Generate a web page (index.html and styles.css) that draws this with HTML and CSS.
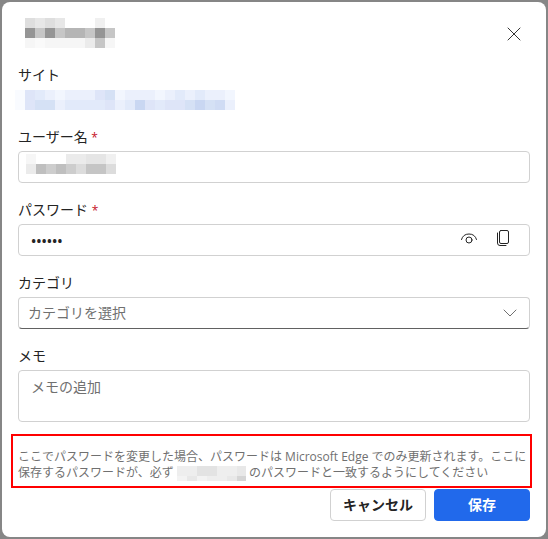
FILE: index.html
```html
<!DOCTYPE html>
<html lang="ja">

<head>
  <meta charset="UTF-8">
  <meta name="viewport" content="width=device-width, initial-scale=1.0">
  <title>パスワードの編集</title>
  <link rel="stylesheet" href="styles.css">
</head>

<body>
  <form class="dialog">
    <div class="dialog-header">
      <svg class="masked-title" width="90" height="30" shape-rendering="crispEdges" aria-hidden="true">
        <path fill="#dedede" d="M0 0h10v10H0zM20 0h10v10H20z" />
        <path fill="#e7e7e7" d="M10 0h10v10H10zM30 0h10v10H30z" />
        <path fill="#f0f0f0" d="M70 0h10v10H70z" />
        <path fill="#959595" d="M0 10h10v10H0zM20 10h10v10H20zM70 10h10v10H70z" />
        <path fill="#c6c6c6" d="M10 10h10v10H10zM30 10h10v10H30zM60 10h10v10H60zM80 10h10v10H80zM70 20h10v10H70z" />
        <path fill="#b5b5b5" d="M40 10h20v10H40z" />
        <path fill="#f6f6f6" d="M0 20h10v10H0zM20 20h40v10H20zM80 20h10v10H80z" />
        <path fill="#fafafa" d="M10 20h10v10H10z" />
        <path fill="#ebebeb" d="M60 20h10v10H60z" />
      </svg>
      <button type="button" class="close" aria-label="閉じる">
        <svg width="14" height="14" viewBox="0 0 14 14">
          <path d="M1 1l12 12M13 1L1 13" />
        </svg>
      </button>
    </div>

    <div class="field">
      <span class="label">サイト</span>
      <a href="#" class="site-link" aria-label="サイト">
        <svg width="220" height="20" shape-rendering="crispEdges" aria-hidden="true">
          <path fill="#f9fbff" d="M0 0h10v20H0z" />
          <path fill="#ebf0fc" d="M10 0h210v20H10z" />
          <path fill="#dee5f8" d="M10 0h10v20H10zM80 0h10v10H80zM90 10h10v10H90zM130 10h10v10H130zM150 10h20v10H150z" />
          <path fill="#e2eafa" d="M20 0h10v10H20zM50 10h30v10H50zM80 10h10v10H80zM110 10h10v10H110zM140 10h10v10H140zM160 0h10v10H160zM180 0h10v10H180z" />
          <path fill="#f2f6fe" d="M40 0h10v10H40zM100 0h10v10H100zM140 0h10v10H140zM210 0h10v10H210z" />
          <path fill="#d5e1f5" d="M20 10h20v10H20zM90 0h10v10H90zM170 10h10v10H170zM190 10h10v10H190z" />
          <path fill="#c9d7f2" d="M120 10h10v10H120zM180 10h10v10H180z" />
          <path fill="#d0dcf4" d="M200 10h10v10H200z" />
        </svg>
      </a>
    </div>

    <div class="field">
      <label class="label" for="username">ユーザー名 <span class="required">*</span></label>
      <div class="control">
        <input type="text" id="username" required>
        <svg class="masked-name" width="90" height="20" shape-rendering="crispEdges" aria-hidden="true">
          <path fill="#f6f6f6" d="M0 0h10v10H0z" />
          <path fill="#ebebeb" d="M0 10h10v10H0zM40 0h20v10H40z" />
          <path fill="#e5e5e5" d="M60 0h20v10H60z" />
          <path fill="#f0f0f0" d="M80 0h10v10H80z" />
          <path fill="#bfbfbf" d="M10 10h10v10H10zM30 10h10v10H30z" />
          <path fill="#cdcdcd" d="M20 10h10v10H20zM40 10h10v10H40z" />
          <path fill="#dcdcdc" d="M50 10h10v10H50zM80 10h10v10H80z" />
          <path fill="#c5c5c5" d="M60 10h20v10H60z" />
        </svg>
      </div>
    </div>

    <div class="field">
      <label class="label" for="password">パスワード <span class="required">*</span></label>
      <div class="control">
        <input type="password" id="password" class="password" value="secret" required>
        <button type="button" class="icon-button" aria-label="パスワードを表示">
          <svg width="18" height="18" viewBox="0 0 18 18">
            <path d="M1.500 10.500C2.500 7 5 5 9 5s6.500 2 7.500 5.500" />
            <circle cx="9" cy="11" r="3" />
          </svg>
        </button>
        <button type="button" class="icon-button" aria-label="パスワードをコピー">
          <svg width="18" height="18" viewBox="0 0 18 18">
            <rect x="5.500" y="1.500" width="9" height="13" rx="1.500" />
            <path d="M3.500 4v10q0 2.500 2.500 2.500h6" />
          </svg>
        </button>
      </div>
    </div>

    <div class="field">
      <label class="label" for="category">カテゴリ</label>
      <div class="control category">
        <select id="category">
          <option>カテゴリを選択</option>
        </select>
        <svg class="chevron" width="14" height="8" viewBox="0 0 14 8" aria-hidden="true">
          <path d="M1 1l6 6 6-6" />
        </svg>
      </div>
    </div>

    <div class="field">
      <label class="label" for="memo">メモ</label>
      <textarea id="memo" placeholder="メモの追加"></textarea>
    </div>

    <p class="notice">ここでパスワードを変更した場合、パスワードは Microsoft Edge でのみ更新されます。ここに保存するパスワードが、必ず
      <svg class="masked-site" width="69" height="15" shape-rendering="crispEdges" aria-hidden="true">
        <path fill="#eeeeee" d="M0 0h69v15H0z" />
        <path fill="#e3e3e3" d="M20 0h20v10H20z" />
        <path fill="#f3f3f3" d="M0 10h10v5H0zM20 10h10v5H20z" />
        <path fill="#e8e8e8" d="M10 10h10v5H10zM50 10h10v5H50zM60 0h9v10H60z" />
        <path fill="#d5d5d5" d="M60 10h9v5H60z" />
      </svg>
      のパスワードと一致するようにしてください</p>

    <div class="actions">
      <button type="button" class="button">キャンセル</button>
      <button type="submit" class="button primary">保存</button>
    </div>
  </form>
</body>

</html>
```
FILE: styles.css
```css
* {
  box-sizing: border-box;
}

body {
  margin: 0;
  padding: 2px;
  background-color: #868686;
  color: #242424;
  font-family: "Open Sans", "Noto Sans CJK JP", sans-serif;
  font-size: 14px;
  line-height: 20px;
}

button,
input,
select,
textarea {
  font: inherit;
  color: inherit;
}

svg {
  display: block;
  fill: none;
  stroke-linecap: round;
}

.dialog {
  padding: 16px;
  background-color: white;
  border-radius: 8px;
}

.dialog-header {
  display: flex;
  justify-content: space-between;
  align-items: center;
  height: 30px;
  margin-bottom: 17px;
  padding-left: 7px;
}

.close {
  display: flex;
  justify-content: center;
  align-items: center;
  width: 32px;
  height: 32px;
  padding: 2px 0 0;
  border: none;
  background: none;
  stroke: #333;
  cursor: pointer;
}

.field {
  display: flex;
  flex-direction: column;
  gap: 4px;
  margin-bottom: 17px;
}

.label {
  height: 20px;
}

.required {
  color: #c50f1f;
  font-size: 12px;
}

.site-link {
  display: block;
  height: 21px;
  padding-top: 1px;
  margin-left: -3px;
}

.control {
  position: relative;
  display: flex;
  align-items: center;
  height: 32px;
  border: 1px solid #d1d1d1;
  border-radius: 4px;
}

.control input {
  flex: 1;
  min-width: 0;
  height: 30px;
  padding: 0 12px;
  border: none;
  background: none;
  outline: none;
}

.control .password {
  font-weight: 600;
}

.masked-name {
  position: absolute;
  top: 2px;
  left: 7px;
}

.icon-button {
  display: flex;
  justify-content: center;
  align-items: center;
  width: 34px;
  height: 30px;
  padding: 0 0 4px;
  border: none;
  background: none;
  stroke: #242424;
  cursor: pointer;
}

.icon-button:last-child {
  margin-right: 9px;
}

.category {
  border-bottom-color: #616161;
}

.category select {
  appearance: none;
  width: 100%;
  height: 30px;
  padding: 0 36px 0 9px;
  border: none;
  background: none;
  color: #707070;
}

.chevron {
  position: absolute;
  right: 12px;
  stroke: #707070;
  pointer-events: none;
}

textarea {
  display: block;
  width: 100%;
  height: 52px;
  padding: 6px 12px;
  border: 1px solid #d1d1d1;
  border-radius: 4px;
  resize: none;
}

textarea::placeholder {
  color: #707070;
}

.notice {
  margin: -5px -2px 1px -7px;
  padding: 13px 0 5px 5px;
  border: 2px solid #f00;
  color: #707070;
  font-size: 12px;
  line-height: 16px;
}

.masked-site {
  display: inline-block;
  vertical-align: -4px;
}

.actions {
  display: flex;
  justify-content: flex-end;
  gap: 8px;
}

.button {
  width: 96px;
  height: 32px;
  padding: 0;
  border: 1px solid #d1d1d1;
  border-radius: 4px;
  background-color: white;
  font-weight: 600;
  cursor: pointer;
}

.primary {
  border-color: #2169eb;
  background-color: #2169eb;
  color: white;
}
```
